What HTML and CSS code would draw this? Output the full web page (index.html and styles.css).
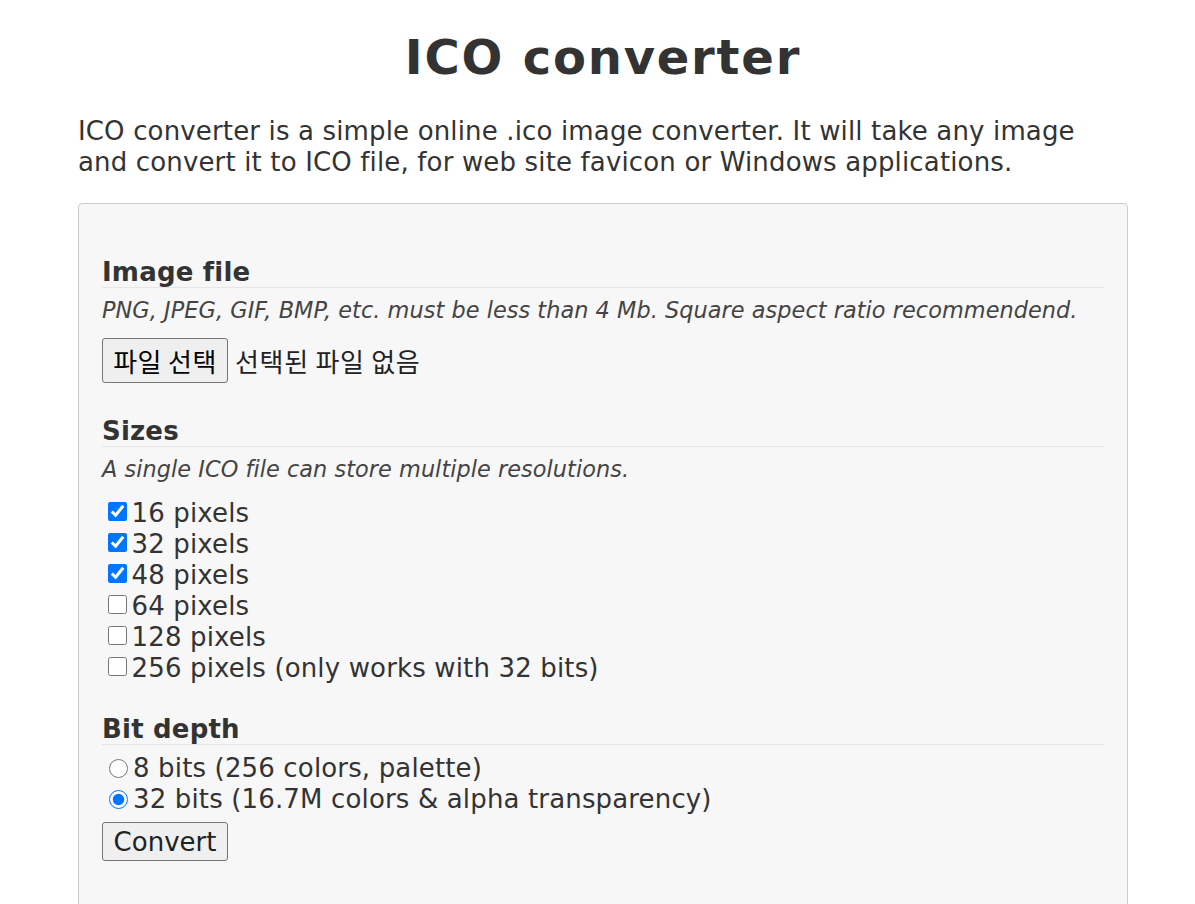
FILE: index.html
```html
<!DOCTYPE html>
<html lang="en">
<head>
<meta charset="utf-8">
<title>ICO converter</title>
<link rel="stylesheet" href="styles.css">
</head>
<body>
<div class="page">
  <h1 class="title">ICO converter</h1>
  <p class="intro">ICO converter is a simple online .ico image converter. It will take any image and convert it to ICO file, for web site favicon or Windows applications.</p>
  <form class="panel">
    <section class="group group-file">
      <h3 class="group-title">Image file</h3>
      <p class="hint">PNG, JPEG, GIF, BMP, etc. must be less than 4 Mb. Square aspect ratio recommendend.</p>
      <div class="file-row">
        <button type="button" class="btn btn-file">파일 선택</button>
        <span class="file-status">선택된 파일 없음</span>
      </div>
    </section>
    <section class="group group-sizes">
      <h3 class="group-title">Sizes</h3>
      <p class="hint">A single ICO file can store multiple resolutions.</p>
      <ul class="options options-sizes">
        <li><label class="opt"><input type="checkbox" class="box" checked>16 pixels</label></li>
        <li><label class="opt"><input type="checkbox" class="box" checked>32 pixels</label></li>
        <li><label class="opt"><input type="checkbox" class="box" checked>48 pixels</label></li>
        <li><label class="opt"><input type="checkbox" class="box">64 pixels</label></li>
        <li><label class="opt"><input type="checkbox" class="box">128 pixels</label></li>
        <li><label class="opt"><input type="checkbox" class="box">256 pixels (only works with 32 bits)</label></li>
      </ul>
    </section>
    <section class="group">
      <h3 class="group-title">Bit depth</h3>
      <ul class="options options-bits">
        <li><label class="opt"><input type="radio" name="bpp" class="radio">8 bits (256 colors, palette)</label></li>
        <li><label class="opt"><input type="radio" name="bpp" class="radio" checked>32 bits (16.7M colors &amp; alpha transparency)</label></li>
      </ul>
      <button type="button" class="btn btn-convert">Convert</button>
    </section>
  </form>
</div>
</body>
</html>
```
FILE: styles.css
```css
html, body {
  margin: 0;
  padding: 0;
  background: #ffffff;
}
body {
  font-family: "DejaVu Sans", Verdana, sans-serif;
  color: #333333;
  font-size: 26px;
  line-height: 31px;
  letter-spacing: 0.15px;
}
.page {
  width: 1050px;
  margin: 0 0 0 78px;
}
.title {
  font-size: 48px;
  line-height: 56px;
  font-weight: bold;
  letter-spacing: 1.8px;
  text-align: center;
  margin: 29px 0 0;
}
.intro {
  margin: 31px 0 25px;
}
.panel {
  background: #f7f7f7;
  border: 1px solid #cccccc;
  border-radius: 4px;
  padding: 54px 22px 60px 23px;
  min-height: 700px;
}
.group {
  margin: 0 0 30px;
}
.group-file {
  margin-bottom: 34px;
}
.group-sizes {
  margin-bottom: 31px;
}
.group-title {
  font-size: 26px;
  line-height: 29px;
  font-weight: bold;
  letter-spacing: 0.2px;
  margin: 0;
  border-bottom: 1px solid #e6e6e6;
}
.hint {
  font-style: italic;
  font-size: 22.4px;
  line-height: 28px;
  letter-spacing: 0.05px;
  margin: 8px 0 0;
  color: #444444;
}
.file-row {
  display: flex;
  align-items: center;
  gap: 7px;
  margin-top: 14px;
}
.btn {
  font-family: "DejaVu Sans", "Noto Sans CJK KR", sans-serif;
  font-size: 26px;
  color: #000000;
  background: #efefef;
  border: 1px solid #767676;
  border-radius: 3px;
  padding: 0;
  width: 126px;
  margin: 0;
}
.btn-file {
  font-family: "Noto Sans CJK KR", sans-serif;
  height: 45px;
  letter-spacing: 0.4px;
}
.file-status {
  font-family: "Noto Sans CJK KR", sans-serif;
  font-size: 26px;
  letter-spacing: 0.7px;
  color: #222222;
}
.options {
  list-style: none;
  margin: 0;
  padding: 0;
}
.options-sizes {
  margin-top: 15px;
}
.options-bits {
  margin-top: 8px;
}
.opt {
  display: flex;
  align-items: center;
  line-height: 31px;
}
.box {
  width: 19px;
  height: 19px;
  margin: 0 4.5px 4px 6px;
}
.radio {
  width: 19px;
  height: 19px;
  margin: 0 5px 0 7px;
}
.btn-convert {
  height: 39px;
  margin-top: 7px;
  color: #222222;
}
```
